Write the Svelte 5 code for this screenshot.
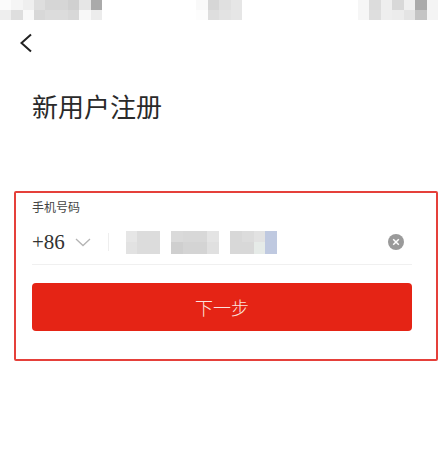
<script>
  // blurred status bar + phone number, kept as tile rows
  const statusLeft = [
    ["#fbfbfb", "#f5f5f5", "#efefef", "#dedede", "#d6d6d6", "#d6d6d6", "#d0d0d0", "#e6e6e6", "#aaaaaa"],
    ["#eeeeee", "#dedede", "#f9f9f9", "#d8d8d8", "#dcdcdc", "#dcdcdc", "#d8d8d8", "#f8f8f8", "#ececec"]
  ];
  const statusMid = [
    ["#f9f9f9", "#d6d6d6", "#e0e0e0", "#e6e6e6"],
    ["#fdfdfd", "#dedede", "#e3e3e3", "#e6e6e6"]
  ];
  const statusRight = [
    ["#f6f6f6", "#dcdcdc", "#eeeeee", "#d8d8d8", "#efefef", "#aaaaaa", "#f4f4f4"],
    ["#f6f6f6", "#dedede", "#eeeeee", "#ececec", "#e4e4e4", "#c4c4c4", "#f4f4f4"]
  ];
  const phone = [
    { w: 34, cols: 3, tiles: ["#e6e6e6", "#dcdcdc", "#dcdcdc", "#e2e2e2", "#dcdcdc", "#dcdcdc"] },
    { w: 48, cols: 4, tiles: ["#dadada", "#d8d8d8", "#d8d8d8", "#e4e4e4", "#cfcfcf", "#d4d4d4", "#d4d4d4", "#e0e0e0"] },
    { w: 47, cols: 4, tiles: ["#d8d8d8", "#dcdcdc", "#e2e2e2", "#bfc9e0", "#d8d8d8", "#d8d8d8", "#e6ebe8", "#bfc9e0"] }
  ];
</script>

<div class="page">
  <div class="status">
    <div class="mosaic left">
      {#each statusLeft as row}
        <div class="row">
          {#each row as c}<span class="tile" style="background: {c}"></span>{/each}
        </div>
      {/each}
    </div>
    <div class="mosaic mid">
      {#each statusMid as row}
        <div class="row">
          {#each row as c}<span class="tile" style="background: {c}"></span>{/each}
        </div>
      {/each}
    </div>
    <div class="mosaic right">
      {#each statusRight as row}
        <div class="row">
          {#each row as c}<span class="tile" style="background: {c}"></span>{/each}
        </div>
      {/each}
    </div>
  </div>

  <svg class="back" width="14" height="20" viewBox="0 0 14 20" aria-label="返回">
    <path d="M12 1.5 L2.5 10 L12 18.5" fill="none" stroke="#222" stroke-width="2" />
  </svg>

  <h1>新用户注册</h1>

  <div class="box">
    <div class="label">手机号码</div>
    <div class="field">
      <span class="code">+86</span>
      <svg class="caret" width="16" height="9" viewBox="0 0 16 9">
        <path d="M1 1 L8 7.5 L15 1" fill="none" stroke="#b4b4b4" stroke-width="1.3" />
      </svg>
      <span class="sep"></span>
      <div class="number">
        {#each phone as block}
          <div class="block" style="width: {block.w}px; grid-template-columns: repeat({block.cols}, 1fr)">
            {#each block.tiles as c}<span style="background: {c}"></span>{/each}
          </div>
        {/each}
      </div>
      <svg class="clear" width="16" height="16" viewBox="0 0 16 16">
        <circle cx="8" cy="8" r="8" fill="#9a9a9a" />
        <path d="M5.2 5.2 L10.8 10.8 M10.8 5.2 L5.2 10.8" stroke="#fff" stroke-width="1.5" />
      </svg>
    </div>
    <button class="next">下一步</button>
  </div>
</div>

<style>
  :global(body) {
    background: #fff;
  }
  .page {
    width: 442px;
    height: 466px;
    overflow: hidden;
    font-family: "Noto Sans CJK SC", "Liberation Sans", sans-serif;
    color: #222;
  }
  .status {
    display: flex;
    height: 21px;
  }
  .mosaic {
    filter: blur(0.6px);
  }
  .left {
    width: 102px;
  }
  .mid {
    width: 46px;
    margin-left: 94px;
  }
  .right {
    width: 80px;
    margin-left: 116px;
  }
  .row {
    display: flex;
    height: 10px;
  }
  .tile {
    flex: 1;
  }
  .back {
    display: block;
    margin: 12px 0 0 19px;
  }
  h1 {
    margin: 36px 0 0 32px;
    font-size: 26px;
    line-height: 34px;
    font-weight: 400;
    color: #2a2a2a;
  }
  .box {
    box-sizing: border-box;
    width: 424px;
    height: 170px;
    margin: 68px 0 0 14px;
    padding: 5px 24px 0 16px;
    border: 2px solid #e5403a;
    border-radius: 2px;
  }
  .label {
    font-size: 12px;
    line-height: 18px;
    color: #444;
  }
  .field {
    display: flex;
    align-items: center;
    height: 44px;
    margin-top: 4px;
    border-bottom: 1px solid #f0f0f0;
  }
  .code {
    width: 43px;
    font-family: "Liberation Serif", serif;
    font-size: 21px;
    color: #333;
  }
  .caret {
    flex: none;
    margin-top: 1px;
  }
  .sep {
    width: 1px;
    height: 18px;
    margin-left: 17px;
    background: #eeeeee;
  }
  .number {
    display: flex;
    gap: 11px;
    margin-left: 17px;
  }
  .block {
    display: grid;
    grid-template-rows: 1fr 1fr;
    height: 23px;
    filter: blur(0.5px);
  }
  .clear {
    flex: none;
    margin-left: auto;
    margin-right: 8px;
  }
  .next {
    display: block;
    width: 100%;
    height: 48px;
    margin-top: 18px;
    border: 0;
    border-radius: 4px;
    background: #e52415;
    color: #fbe3df;
    font-family: inherit;
    font-size: 18px;
    font-weight: 300;
    padding: 0;
  }
</style>
